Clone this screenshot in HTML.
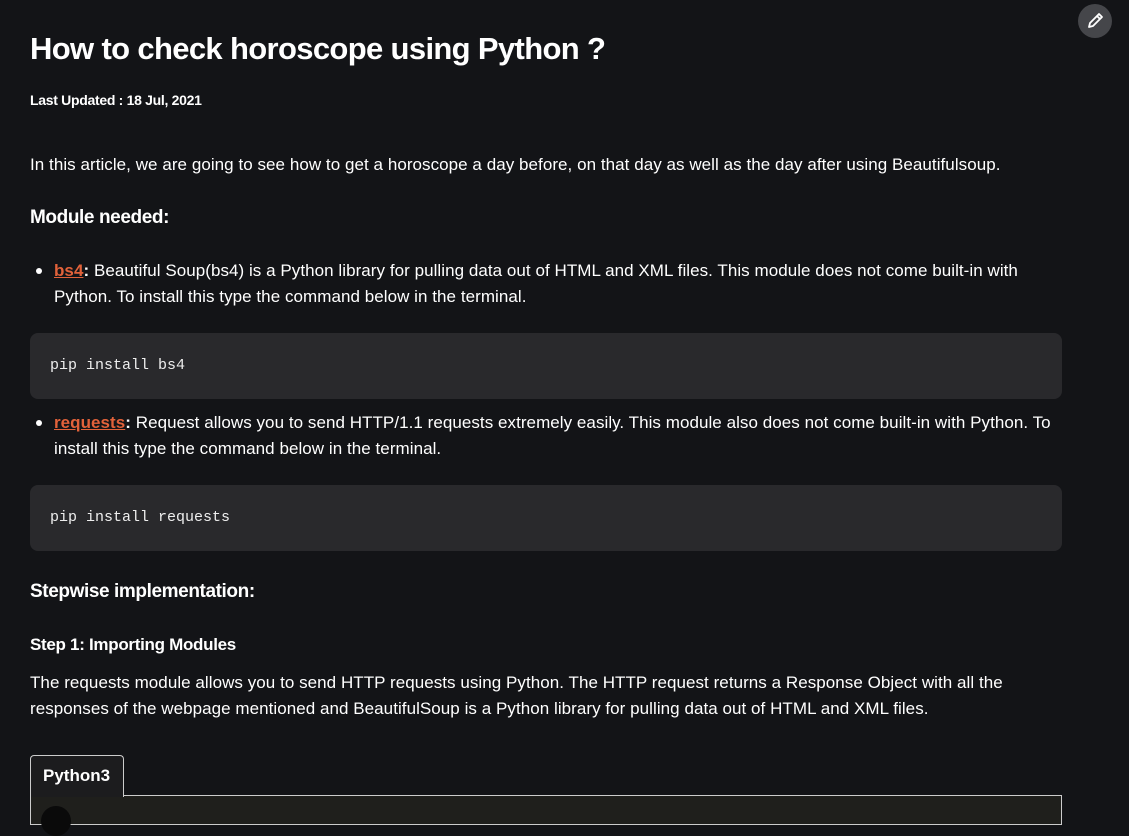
<!DOCTYPE html>
<html><head><meta charset="utf-8"><style>
*{margin:0;padding:0;box-sizing:border-box}
html,body{width:1129px;height:816px;overflow:hidden;background:#131417;color:#fff;font-family:"Liberation Sans",sans-serif}
.t{position:absolute;left:30px;white-space:nowrap}
h1{position:absolute;left:30px;top:31px;font-size:31px;font-weight:bold;letter-spacing:-0.65px}
.p{font-size:17px;letter-spacing:0.05px;line-height:26px}
.b{font-weight:bold}
a{color:#e2623a;text-decoration:underline;font-weight:bold}
.code{position:absolute;left:30px;width:1032px;height:66px;background:#29292c;border-radius:8px;font-family:"Liberation Mono",monospace;font-size:15px;padding:24px 20px;color:#eee}
.dot{position:absolute;left:36px;width:6px;height:6px;border-radius:3px;background:#fff}
</style></head><body>
<div style="position:absolute;left:1078px;top:4px;width:34px;height:34px;border-radius:17px;background:#45464a"></div>
<svg style="position:absolute;left:1085px;top:11px" width="20" height="20" viewBox="0 0 20 20" fill="none" stroke="#fff" stroke-width="1.8" stroke-linejoin="round"><path d="M4 16l1-4 9-9 3 3-9 9z M12 5l3 3"/></svg>
<h1>How to check horoscope using Python ?</h1>
<div class="t b" style="top:92px;font-size:14px;letter-spacing:-0.3px">Last Updated : 18 Jul, 2021</div>
<div class="t p" style="top:152px">In this article, we are going to see how to get a horoscope a day before, on that day as well as the day after using Beautifulsoup.</div>
<div class="t b" style="top:207px;font-size:19px;letter-spacing:-0.4px">Module needed:</div>
<div class="dot" style="top:268px"></div>
<div class="t p" style="left:54px;top:258px"><a>bs4</a><b>:</b> Beautiful Soup(bs4) is a Python library for pulling data out of HTML and XML files. This module does not come built-in with<br>Python. To install this type the command below in the terminal.</div>
<div class="code" style="top:333px">pip install bs4</div>
<div class="dot" style="top:420px"></div>
<div class="t p" style="left:54px;top:410px"><a>requests</a><b>:</b> Request allows you to send HTTP/1.1 requests extremely easily. This module also does not come built-in with Python. To<br>install this type the command below in the terminal.</div>
<div class="code" style="top:485px">pip install requests</div>
<div class="t b" style="top:581px;font-size:19px;letter-spacing:-0.4px">Stepwise implementation:</div>
<div class="t b" style="top:635px;font-size:17px;letter-spacing:-0.3px">Step 1: Importing Modules</div>
<div class="t p" style="top:670px">The requests module allows you to send HTTP requests using Python. The HTTP request returns a Response Object with all the<br>responses of the webpage mentioned and BeautifulSoup is a Python library for pulling data out of HTML and XML files.</div>
<div style="position:absolute;left:30px;top:795px;width:1032px;height:30px;border:1px solid #ccc;background:#1f1f1c"></div>
<div style="position:absolute;left:30px;top:755px;width:94px;height:42px;border:1px solid #ccc;border-bottom:none;border-radius:4px 4px 0 0;background:#1c1c1e;font-size:17px;font-weight:bold;padding:10px 12px">Python3</div>
<div style="position:absolute;left:41px;top:806px;width:30px;height:30px;border-radius:15px;background:#0a0a0a"></div>
</body></html>
